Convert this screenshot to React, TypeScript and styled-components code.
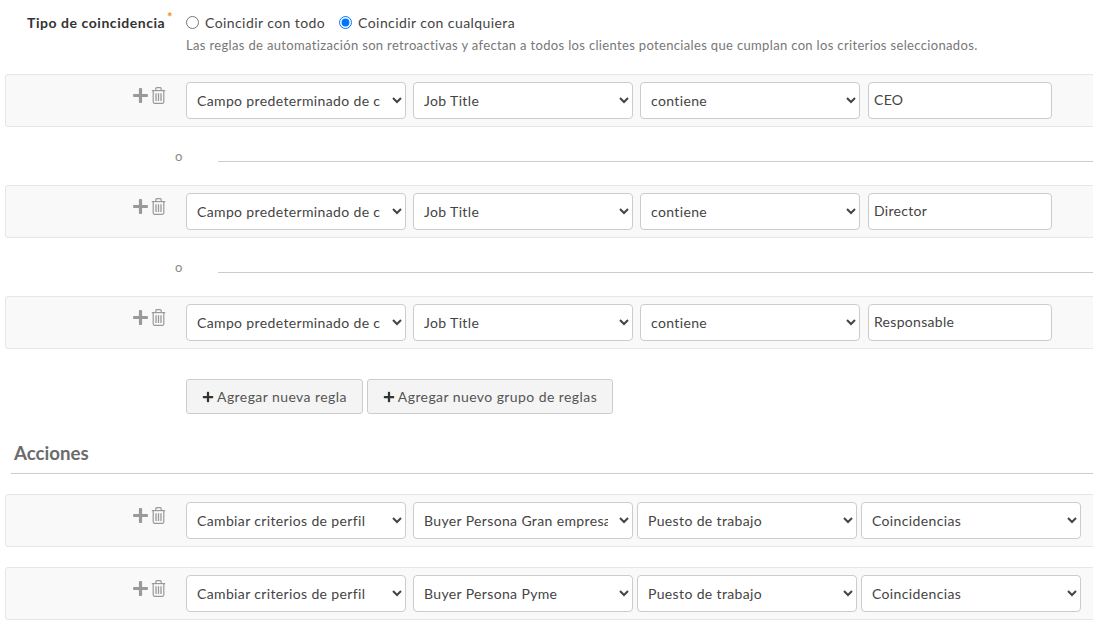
import React from "react";
import styled, { createGlobalStyle } from "styled-components";
import { FaPlus } from "react-icons/fa";

const GlobalStyle = createGlobalStyle`
  html, body {
    margin: 0;
    padding: 0;
    background: #fff;
    overflow: hidden;
  }
  body, select, input, button {
    font-family: "Lato", "Open Sans", sans-serif;
  }
`;

const Page = styled.div`
  width: 1093px;
  height: 640px;
  overflow: hidden;
  padding: 13px 0 0 5px;
  box-sizing: border-box;
`;

const MatchRow = styled.div`
  display: flex;
`;

const MatchLabel = styled.label`
  width: 160px;
  padding-left: 22px;
  box-sizing: border-box;
  font-size: 14px;
  font-weight: 700;
  color: #333;
  line-height: 19px;
  white-space: nowrap;
  letter-spacing: 0.55px;
  position: relative;
  sup {
    position: absolute;
    left: 162px;
    top: -2px;
    color: #e8912d;
    font-size: 13px;
    line-height: 12px;
  }
`;

const MatchBody = styled.div`
  margin-left: 21px;
`;

const RadioLine = styled.div`
  display: flex;
  align-items: center;
  gap: 14px;
  height: 19px;
`;

const RadioOption = styled.label`
  display: flex;
  align-items: center;
  font-size: 14px;
  color: #444;
  letter-spacing: 0.42px;
  input {
    margin: 0 6px 0 0;
    width: 13px;
    height: 13px;
  }
`;

const Hint = styled.p`
  margin: 5px 0 0;
  font-size: 13px;
  line-height: 16px;
  color: #777;
  letter-spacing: 0.34px;
  white-space: nowrap;
`;

const RuleRow = styled.div<{ $mt?: number }>`
  display: flex;
  width: 1110px;
  height: 53px;
  box-sizing: border-box;
  margin-top: ${(p) => p.$mt ?? 0}px;
  padding: 7px 0 0 0;
  background: #f9f9f9;
  border: 1px solid #e6e6e6;
  border-radius: 3px;
`;

const Tools = styled.div`
  width: 180px;
  flex-shrink: 0;
  display: flex;
  justify-content: flex-end;
  align-items: flex-start;
  gap: 2px;
  padding: 5px 20px 0 0;
  box-sizing: border-box;
  color: #999;
`;

const Fields = styled.div<{ $gap: number }>`
  display: flex;
  gap: ${(p) => p.$gap}px;
`;

const Select = styled.select<{ $spaced?: boolean }>`
  width: 220px;
  height: 37px;
  box-sizing: border-box;
  padding: 0 8px 0 6px;
  margin-right: ${(p) => (p.$spaced ? 3 : 0)}px;
  background: #fff;
  border: 1px solid #ccc;
  border-radius: 4px;
  font-size: 14px;
  letter-spacing: 0.36px;
  color: #444;
`;

const TextField = styled.input`
  width: 184px;
  height: 37px;
  margin-left: 1px;
  box-sizing: border-box;
  padding: 0 5px 2px;
  background: #fff;
  border: 1px solid #ccc;
  border-radius: 4px;
  font-size: 14px;
  letter-spacing: 0.3px;
  color: #444;
`;

const Connector = styled.div`
  height: 58px;
  display: flex;
  align-items: flex-start;
  padding-left: 170px;
  box-sizing: border-box;
`;

const OrMark = styled.span`
  width: 43px;
  margin-top: 22px;
  font-size: 13px;
  line-height: 14px;
  color: #888;
`;

const OrLine = styled.div`
  flex: 1;
  height: 1px;
  margin-top: 34px;
  background: #ccc;
`;

const ButtonBar = styled.div`
  display: flex;
  gap: 4px;
  margin: 30px 0 0 181px;
`;

const AddButton = styled.button`
  height: 35px;
  padding: 0 15px;
  display: flex;
  align-items: center;
  gap: 3px;
  background: #f4f4f4;
  border: 1px solid #ccc;
  border-radius: 3px;
  font-size: 14px;
  letter-spacing: 0.42px;
  color: #555;
  svg {
    color: #333;
    width: 12px;
    height: 12px;
  }
`;

const SectionTitle = styled.h3`
  margin: 28px 0 0 6px;
  padding: 0 0 9px 3px;
  height: 32px;
  box-sizing: border-box;
  border-bottom: 1px solid #ccc;
  font-size: 18.7px;
  line-height: 23px;
  font-weight: 700;
  color: #6b6b6b;
`;

const Actions = styled.div`
  display: flex;
  flex-direction: column;
  gap: 20px;
  margin-top: 20px;
`;

const TrashIcon = () => (
  <svg width="15" height="17" viewBox="0 0 15 17" fill="none" stroke="currentColor" strokeWidth="1.2">
    <path d="M0.8 3.6h13.4" />
    <path d="M4.8 3.3V1.7c0-.6.4-1 1-1h3.4c.6 0 1 .4 1 1v1.6" />
    <path d="M2.2 3.6v11.2c0 .9.5 1.5 1.2 1.5h8.2c.7 0 1.2-.6 1.2-1.5V3.6" />
    <path d="M5 6.2v7.8M7.5 6.2v7.8M10 6.2v7.8" strokeWidth="1.3" />
  </svg>
);

const RowTools = () => (
  <Tools>
    <FaPlus size={17} />
    <TrashIcon />
  </Tools>
);

const rules = ["CEO", "Director", "Responsable"];
const actions = ["Buyer Persona Gran empresa", "Buyer Persona Pyme"];

export default function App() {
  return (
    <Page>
      <GlobalStyle />
      <MatchRow>
        <MatchLabel>
          Tipo de coincidencia<sup>*</sup>
        </MatchLabel>
        <MatchBody>
          <RadioLine>
            <RadioOption>
              <input type="radio" name="match" />
              Coincidir con todo
            </RadioOption>
            <RadioOption>
              <input type="radio" name="match" defaultChecked />
              Coincidir con cualquiera
            </RadioOption>
          </RadioLine>
          <Hint>
            Las reglas de automatización son retroactivas y afectan a todos los clientes potenciales que cumplan con los
            criterios seleccionados.
          </Hint>
        </MatchBody>
      </MatchRow>

      {rules.map((value, i) => (
        <React.Fragment key={value}>
          {i > 0 && (
            <Connector>
              <OrMark>o</OrMark>
              <OrLine />
            </Connector>
          )}
          <RuleRow $mt={i === 0 ? 21 : 0}>
            <RowTools />
            <Fields $gap={7}>
              <Select defaultValue="a">
                <option value="a">Campo predeterminado de cliente potencial</option>
              </Select>
              <Select>
                <option>Job Title</option>
              </Select>
              <Select>
                <option>contiene</option>
              </Select>
              <TextField defaultValue={value} />
            </Fields>
          </RuleRow>
        </React.Fragment>
      ))}

      <ButtonBar>
        <AddButton>
          <FaPlus />
          Agregar nueva regla
        </AddButton>
        <AddButton>
          <FaPlus />
          Agregar nuevo grupo de reglas
        </AddButton>
      </ButtonBar>

      <SectionTitle>Acciones</SectionTitle>

      <Actions>
        {actions.map((persona) => (
          <RuleRow key={persona}>
            <RowTools />
            <Fields $gap={4}>
              <Select $spaced>
                <option>Cambiar criterios de perfil</option>
              </Select>
              <Select>
                <option>{persona}</option>
              </Select>
              <Select>
                <option>Puesto de trabajo</option>
              </Select>
              <Select>
                <option>Coincidencias</option>
              </Select>
            </Fields>
          </RuleRow>
        ))}
      </Actions>
    </Page>
  );
}
